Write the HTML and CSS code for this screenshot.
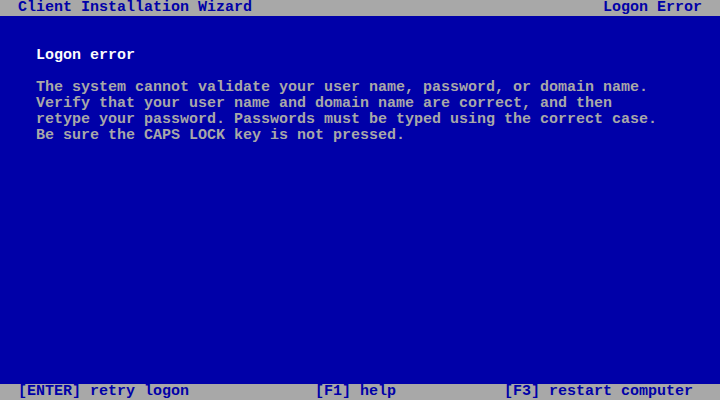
FILE: index.html
```html
<!DOCTYPE html>
<html>
<head>
<meta charset="utf-8">
<link rel="stylesheet" href="styles.css">
</head>
<body>
<div class="screen">
  <header class="bar top">
    <span>Client Installation Wizard</span>
    <span>Logon Error</span>
  </header>
  <main class="content">
    <h1 class="title">Logon error</h1>
    <p class="msg">The system cannot validate your user name, password, or domain name.<br>Verify that your user name and domain name are correct, and then<br>retype your password. Passwords must be typed using the correct case.<br>Be sure the CAPS LOCK key is not pressed.</p>
  </main>
  <footer class="bar bottom">
    <span>[ENTER] retry logon</span>
    <span>[F1] help</span>
    <span>[F3] restart computer</span>
  </footer>
</div>
</body>
</html>
```
FILE: styles.css
```css
html, body {
  margin: 0;
  padding: 0;
  background: #0000a8;
}
.screen {
  width: 720px;
  height: 400px;
  display: flex;
  flex-direction: column;
  background: #0000a8;
  font-family: "Liberation Mono", "DejaVu Sans Mono", monospace;
  font-size: 15px;
  line-height: 16px;
  font-weight: bold;
  color: #a8a8a8;
  overflow: hidden;
}
.bar {
  height: 16px;
  background: #a8a8a8;
  color: #0000a8;
  white-space: pre;
}
.top {
  display: flex;
  justify-content: space-between;
  padding: 0 2ch;
}
.content {
  flex: 1;
  padding: 32px 4ch 0;
}
.title {
  margin: 0 0 16px;
  font-size: 15px;
  line-height: 16px;
  font-weight: bold;
  color: #fcfcfc;
}
.msg {
  margin: 0;
  white-space: pre;
}
.bottom {
  display: grid;
  grid-template-columns: 33ch 21ch auto;
  padding-left: 2ch;
}
```
